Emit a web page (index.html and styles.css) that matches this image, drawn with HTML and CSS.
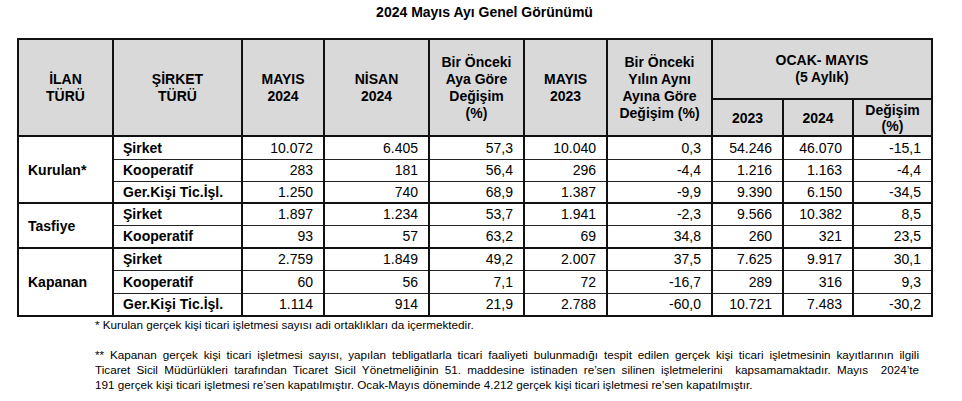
FILE: index.html
```html
<!DOCTYPE html>
<html lang="tr">
<head>
<meta charset="utf-8">
<title>2024 Mayıs Ayı Genel Görünümü</title>
<link rel="stylesheet" href="styles.css">
</head>
<body>
<h1 class="title">2024 Mayıs Ayı Genel Görünümü</h1>
<table class="report">
  <colgroup>
    <col class="c1"><col class="c2"><col class="c3"><col class="c4"><col class="c5">
    <col class="c6"><col class="c7"><col class="c8"><col class="c9"><col class="c10">
  </colgroup>
  <thead>
    <tr class="h1">
      <th rowspan="2">İLAN<br>TÜRÜ</th>
      <th rowspan="2">ŞİRKET<br>TÜRÜ</th>
      <th rowspan="2">MAYIS<br>2024</th>
      <th rowspan="2">NİSAN<br>2024</th>
      <th rowspan="2">Bir Önceki<br>Aya Göre<br>Değişim<br>(%)</th>
      <th rowspan="2">MAYIS<br>2023</th>
      <th rowspan="2">Bir Önceki<br>Yılın Aynı<br>Ayına Göre<br>Değişim (%)</th>
      <th colspan="3">OCAK- MAYIS<br>(5 Aylık)</th>
    </tr>
    <tr class="h2">
      <th>2023</th>
      <th>2024</th>
      <th>Değişim<br>(%)</th>
    </tr>
  </thead>
  <tbody>
    <tr class="r23"><td class="grp" rowspan="3">Kurulan*</td><td class="lbl">Şirket</td><td>10.072</td><td>6.405</td><td>57,3</td><td>10.040</td><td>0,3</td><td>54.246</td><td>46.070</td><td>-15,1</td></tr>
    <tr class="r22"><td class="lbl">Kooperatif</td><td>283</td><td>181</td><td>56,4</td><td>296</td><td>-4,4</td><td>1.216</td><td>1.163</td><td>-4,4</td></tr>
    <tr class="r22"><td class="lbl">Ger.Kişi Tic.İşl.</td><td>1.250</td><td>740</td><td>68,9</td><td>1.387</td><td>-9,9</td><td>9.390</td><td>6.150</td><td>-34,5</td></tr>
  </tbody>
  <tbody>
    <tr class="r22"><td class="grp" rowspan="2">Tasfiye</td><td class="lbl">Şirket</td><td>1.897</td><td>1.234</td><td>53,7</td><td>1.941</td><td>-2,3</td><td>9.566</td><td>10.382</td><td>8,5</td></tr>
    <tr class="r23"><td class="lbl">Kooperatif</td><td>93</td><td>57</td><td>63,2</td><td>69</td><td>34,8</td><td>260</td><td>321</td><td>23,5</td></tr>
  </tbody>
  <tbody>
    <tr class="r22"><td class="grp" rowspan="3">Kapanan</td><td class="lbl">Şirket</td><td>2.759</td><td>1.849</td><td>49,2</td><td>2.007</td><td>37,5</td><td>7.625</td><td>9.917</td><td>30,1</td></tr>
    <tr class="r23"><td class="lbl">Kooperatif</td><td>60</td><td>56</td><td>7,1</td><td>72</td><td>-16,7</td><td>289</td><td>316</td><td>9,3</td></tr>
    <tr class="r23"><td class="lbl">Ger.Kişi Tic.İşl.</td><td>1.114</td><td>914</td><td>21,9</td><td>2.788</td><td>-60,0</td><td>10.721</td><td>7.483</td><td>-30,2</td></tr>
  </tbody>
</table>
<div class="notes">
  <p>* Kurulan gerçek kişi ticari işletmesi sayısı adi ortaklıkları da içermektedir.</p>
  <p class="second">
    <span class="jl">** Kapanan gerçek kişi ticari işletmesi sayısı, yapılan tebligatlarla ticari faaliyeti bulunmadığı tespit edilen gerçek kişi ticari işletmesinin kayıtlarının ilgili</span>
    <span class="jl">Ticaret Sicil Müdürlükleri tarafından Ticaret Sicil Yönetmeliğinin 51. maddesine istinaden re’sen silinen işletmelerini&nbsp; kapsamamaktadır. Mayıs&nbsp; 2024’te</span>
    <span class="ln">191 gerçek kişi ticari işletmesi re’sen kapatılmıştır. Ocak-Mayıs döneminde 4.212 gerçek kişi ticari işletmesi re’sen kapatılmıştır.</span>
  </p>
</div>
</body>
</html>
```

FILE: styles.css
```css
html, body {
  margin: 0;
  padding: 0;
  background: #fff;
  color: #000;
  font-family: "Liberation Sans", Arial, sans-serif;
}

.title {
  margin: 0;
  padding: 4px 0 0 7px;
  font-size: 14px;
  line-height: 16px;
  font-weight: bold;
  text-align: center;
}

.report {
  margin: 18px 0 0 17px;
  border-collapse: collapse;
  table-layout: fixed;
  width: 914px;
  border: 2px solid #111;
}

.c1 { width: 95px; }
.c2 { width: 129px; }
.c3 { width: 82px; }
.c4 { width: 105px; }
.c5 { width: 95px; }
.c6 { width: 83px; }
.c7 { width: 105px; }
.c8 { width: 71px; }
.c9 { width: 70px; }
.c10 { width: 79px; }

.report th {
  background: #d9d9d9;
  border: 2px solid #111;
  padding: 0;
  font-size: 14px;
  line-height: 17px;
  font-weight: bold;
  text-align: center;
  vertical-align: middle;
}

.h1 { height: 60px; }
.h2 { height: 37px; }
.h2 th { line-height: 16px; }

.report td {
  border-left: 2px solid #111;
  border-right: 2px solid #111;
  border-top: 1px solid #222;
  padding: 0 10px 0 4px;
  font-size: 14px;
  line-height: 16px;
  text-align: right;
  vertical-align: middle;
  white-space: nowrap;
}

.r22 { height: 22px; }
.r23 { height: 23px; }

.report td.lbl,
.report td.grp {
  text-align: left;
  font-weight: bold;
  padding-left: 9px;
}

.report tbody tr:first-child td {
  border-top: 2px solid #111;
}

.notes {
  margin-left: 95px;
  width: 824px;
  font-size: 11.7px;
  line-height: 15px;
}

.notes p {
  margin: 0;
  white-space: nowrap;
}

.notes .second {
  margin-top: 15px;
}

.notes .jl,
.notes .ln {
  display: block;
}

.notes .jl {
  white-space: normal;
  text-align: justify;
  text-align-last: justify;
}
```
